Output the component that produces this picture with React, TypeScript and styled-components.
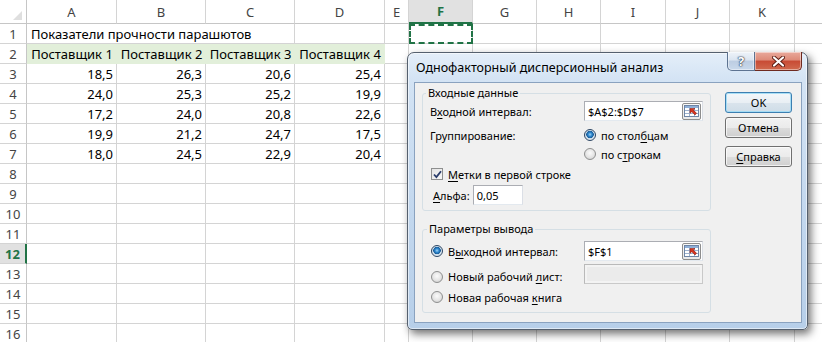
import React from 'react';
import styled, { createGlobalStyle } from 'styled-components';

const GlobalStyle = createGlobalStyle`
  html, body { margin: 0; padding: 0; background: #fff; overflow: hidden; }
  body { font-family: "Noto Sans", "Liberation Sans", sans-serif; }
`;

const COLS = [27, 90, 89, 89, 90, 24, 64, 64, 64, 65, 64, 65, 64];
const LETTERS = ['A', 'B', 'C', 'D', 'E', 'F', 'G', 'H', 'I', 'J', 'K', ''];
const GREEN = '#217346';

const DATA = [
  ['18,5', '26,3', '20,6', '25,4'],
  ['24,0', '25,3', '25,2', '19,9'],
  ['17,2', '24,0', '20,8', '22,6'],
  ['19,9', '21,2', '24,7', '17,5'],
  ['18,0', '24,5', '22,9', '20,4'],
];

const Page = styled.div`
  position: relative;
  width: 822px;
  height: 342px;
  overflow: hidden;
`;

const Sheet = styled.div`
  display: grid;
  grid-template-columns: ${COLS.map((c) => c + 'px').join(' ')};
  grid-template-rows: 24px repeat(16, 20px);
  font-size: 13px;
  color: #000;
`;

const Corner = styled.div`
  position: relative;
  box-sizing: border-box;
  border-right: 1px solid #c6c6c6;
  border-bottom: 1px solid #c6c6c6;
  background: #fff;

  &::after {
    content: '';
    position: absolute;
    right: 4px;
    bottom: 3px;
    border-left: 9px solid transparent;
    border-bottom: 9px solid #dfdfdf;
  }
`;

const ColHead = styled.div<{ $active?: boolean }>`
  box-sizing: border-box;
  display: flex;
  align-items: center;
  justify-content: center;
  border-right: 1px solid #d4d4d4;
  border-bottom: ${({ $active }) => ($active ? `2px solid ${GREEN}` : '1px solid #c6c6c6')};
  background: ${({ $active }) => ($active ? '#e1e1e1' : '#fff')};
  color: ${({ $active }) => ($active ? GREEN : '#444')};
  font-weight: ${({ $active }) => ($active ? 700 : 400)};
  font-size: 13px;
`;

const RowHead = styled.div<{ $active?: boolean }>`
  box-sizing: border-box;
  display: flex;
  align-items: center;
  justify-content: center;
  border-bottom: 1px solid #d4d4d4;
  border-right: ${({ $active }) => ($active ? `2px solid ${GREEN}` : '1px solid #c6c6c6')};
  background: ${({ $active }) => ($active ? '#e1e1e1' : '#fff')};
  color: ${({ $active }) => ($active ? GREEN : '#444')};
  font-weight: ${({ $active }) => ($active ? 700 : 400)};
  font-size: 13px;
`;

const Cell = styled.div<{ $align?: 'left' | 'right' | 'center'; $fill?: string; $span?: number; $marquee?: boolean }>`
  box-sizing: border-box;
  display: flex;
  align-items: center;
  justify-content: ${({ $align }) => ($align === 'right' ? 'flex-end' : $align === 'center' ? 'center' : 'flex-start')};
  padding: 0 3px 0 4px;
  white-space: nowrap;
  border-right: 1px solid ${({ $fill }) => $fill || '#d4d4d4'};
  border-bottom: 1px solid ${({ $fill }) => $fill || '#d4d4d4'};
  background: ${({ $fill }) => $fill || '#fff'};
  grid-column: span ${({ $span }) => $span || 1};
  outline: ${({ $marquee }) => ($marquee ? `2px dashed ${GREEN}` : 'none')};
  outline-offset: -2px;
`;

/* ---------- dialog ---------- */

const Dialog = styled.div`
  position: absolute;
  left: 407px;
  top: 52px;
  width: 401px;
  height: 278px;
  box-sizing: border-box;
  display: flex;
  flex-direction: column;
  border: 1px solid #55606e;
  border-radius: 7px 7px 5px 5px;
  background: linear-gradient(180deg, #e4eef9 0%, #d3e3f4 10%, #c2d7ee 60%, #b7cfe9 100%);
  box-shadow: inset 0 0 0 1px rgba(255, 255, 255, 0.55), 3px 4px 9px rgba(0, 0, 0, 0.55);
  font-family: "Noto Sans", "Liberation Sans", sans-serif;
  font-size: 11px;
  color: #000;
`;

const TitleBar = styled.div`
  height: 29px;
  display: flex;
  align-items: flex-start;
`;

const Title = styled.div`
  flex: 1;
  align-self: center;
  padding-left: 8px;
  font-size: 12.5px;
`;

const CaptionButtons = styled.div`
  display: flex;
  margin: -1px 5px 0 0;
`;

const CaptionBtn = styled.div<{ $close?: boolean }>`
  box-sizing: border-box;
  width: ${({ $close }) => ($close ? 47 : 28)}px;
  height: 19px;
  display: flex;
  align-items: center;
  justify-content: center;
  border: 1px solid ${({ $close }) => ($close ? '#6e2a20' : '#5d7391')};
  border-top: none;
  border-left: ${({ $close }) => ($close ? 'none' : '1px solid #5d7391')};
  border-radius: ${({ $close }) => ($close ? '0 0 5px 0' : '0 0 0 5px')};
  background: ${({ $close }) =>
    $close
      ? 'linear-gradient(180deg, #e9a99b 0%, #dd8a78 45%, #c84a34 50%, #d06a4e 100%)'
      : 'linear-gradient(180deg, #eef3f9 0%, #dbe5f1 45%, #bccde2 50%, #c9d9ec 100%)'};
  box-shadow: inset 0 0 0 1px rgba(255, 255, 255, 0.45);
`;

const HelpGlyph = styled.span`
  color: #fff;
  font-weight: 700;
  font-size: 13px;
  line-height: 1;
  text-shadow: 0 0 1px #2c3b52, 0 0 1px #2c3b52, 0 0 2px #2c3b52;
`;

const Client = styled.div`
  flex: 1;
  margin: 0 5px 6px 6px;
  display: flex;
  gap: 14px;
  padding: 2px 9px 0 7px;
  border: 1px solid #8aa2bf;
  background: #f0f0f0;
`;

const Groups = styled.div`
  width: 289px;
  display: flex;
  flex-direction: column;
  gap: 10px;
`;

const Group = styled.fieldset<{ $pl: number; $pt: number; $pb: number }>`
  margin: 0;
  min-width: 0;
  padding: ${({ $pt, $pl, $pb }) => `${$pt}px 7px ${$pb}px ${$pl}px`};
  border: 1px solid #d5dfe5;
  border-radius: 3px;
  display: flex;
  flex-direction: column;
`;

const Legend = styled.legend`
  margin-left: -4px;
  padding: 0 2px;
  line-height: 16px;
  font-size: 11px;
`;

const Row = styled.div<{ $h?: number; $mt?: number }>`
  display: grid;
  grid-template-columns: 1fr 119px;
  align-items: center;
  height: ${({ $h }) => $h || 20}px;
  margin-top: ${({ $mt }) => $mt || 0}px;
`;

const Label = styled.div<{ $indent?: number; $drop?: number }>`
  display: flex;
  align-items: center;
  gap: 5px;
  padding-left: ${({ $indent }) => $indent || 0}px;
  margin-top: ${({ $drop }) => $drop || 0}px;
  white-space: nowrap;
`;

const Key = styled.u`
  text-decoration-thickness: 1px;
  text-underline-offset: 2px;
`;

const Field = styled.div<{ $w?: number; $disabled?: boolean }>`
  box-sizing: border-box;
  width: ${({ $w }) => ($w ? $w + 'px' : '100%')};
  height: 20px;
  display: flex;
  align-items: center;
  padding: 0 1px 0 3px;
  border: 1px solid ${({ $disabled }) => ($disabled ? '#b9b9b9' : '#abadb3')};
  border-bottom-color: ${({ $disabled }) => ($disabled ? '#c9c9c9' : '#e3e9ef')};
  border-right-color: ${({ $disabled }) => ($disabled ? '#c9c9c9' : '#dbdfe6')};
  background: ${({ $disabled }) => ($disabled ? '#ebebeb' : '#fff')};
  box-shadow: ${({ $disabled }) => ($disabled ? 'inset 0 0 0 2px #f3f3f3' : 'none')};
`;

const FieldText = styled.span`
  flex: 1;
  white-space: nowrap;
`;

const RefBtn = styled.span`
  box-sizing: border-box;
  width: 19px;
  height: 17px;
  display: flex;
  align-items: center;
  justify-content: center;
  border: 1px solid #8d8d8d;
  border-radius: 2px;
  background: linear-gradient(180deg, #fafafa 0%, #e8e8e8 100%);
`;

const RadioDot = styled.span<{ $on?: boolean }>`
  box-sizing: border-box;
  flex: none;
  width: 12px;
  height: 12px;
  border-radius: 50%;
  border: 1px solid ${({ $on }) => ($on ? '#2c4563' : '#8e8f8f')};
  background: ${({ $on }) =>
    $on
      ? 'radial-gradient(circle at 50% 45%, #9fd3f7 0, #2b85cc 2px, #1a5b96 3.5px, #c9dcec 4px, #f1f1f1 6px)'
      : 'radial-gradient(circle at 50% 40%, #fbfbfb 0, #e6e6e6 4px, #d8d8d8 6px)'};
`;

const CheckBox = styled.span`
  box-sizing: border-box;
  flex: none;
  width: 12px;
  height: 12px;
  display: flex;
  align-items: center;
  justify-content: center;
  border: 1px solid #8e8f8f;
  background: linear-gradient(135deg, #e4e4e4 0%, #f7f7f7 100%);
`;

const AlphaRow = styled.div`
  display: flex;
  align-items: center;
  gap: 3px;
  height: 20px;
  margin-top: 2px;
  padding-left: 3px;
`;

const Buttons = styled.div`
  display: flex;
  flex-direction: column;
  padding-top: 7px;
`;

const DlgButton = styled.div<{ $default?: boolean; $mt?: number }>`
  box-sizing: border-box;
  width: 67px;
  height: 21px;
  margin-top: ${({ $mt }) => $mt || 0}px;
  display: flex;
  align-items: center;
  justify-content: center;
  border: 1px solid ${({ $default }) => ($default ? '#3c7fb1' : '#707070')};
  border-radius: 3px;
  background: ${({ $default }) =>
    $default
      ? 'linear-gradient(180deg, #f3f7fa 0%, #e9eff4 50%, #dae4ec 51%, #cfdde8 100%)'
      : 'linear-gradient(180deg, #f2f2f2 0%, #ebebeb 50%, #dddddd 51%, #cfcfcf 100%)'};
  box-shadow: inset 0 0 0 1px ${({ $default }) => ($default ? 'rgba(160, 220, 245, 0.9)' : 'rgba(255, 255, 255, 0.7)')};
`;

function RefIcon() {
  return (
    <svg width="15" height="12" viewBox="0 0 15 12">
      <rect x="0.5" y="0.5" width="14" height="11" fill="#fff" stroke="#6f86a6" />
      <rect x="1" y="1" width="13" height="2" fill="#8fb0d8" />
      <path d="M1 5.5h13M1 8.5h13M5.5 3v8M10.5 3v8" stroke="#9db3cf" strokeWidth="1" />
      <path d="M6 3.5l5 0-1.6 1.6 3.2 3.2-1.6 1.6-3.2-3.2L6 8.3z" fill="#d6331f" stroke="#8e1d10" strokeWidth="0.6" />
    </svg>
  );
}

function CloseIcon() {
  return (
    <svg width="13" height="11" viewBox="0 0 13 11">
      <path d="M2 1.5l9 8M11 1.5l-9 8" stroke="#5a1c12" strokeWidth="4" strokeLinecap="round" />
      <path d="M2 1.5l9 8M11 1.5l-9 8" stroke="#fff" strokeWidth="2.2" strokeLinecap="round" />
    </svg>
  );
}

function CheckMark() {
  return (
    <svg width="9" height="9" viewBox="0 0 9 9">
      <path d="M1 4.5l2.4 2.6L8 1.2" fill="none" stroke="#2a3c6b" strokeWidth="1.8" />
    </svg>
  );
}

function AnovaDialog() {
  return (
    <Dialog>
      <TitleBar>
        <Title>Однофакторный дисперсионный анализ</Title>
        <CaptionButtons>
          <CaptionBtn><HelpGlyph>?</HelpGlyph></CaptionBtn>
          <CaptionBtn $close><CloseIcon /></CaptionBtn>
        </CaptionButtons>
      </TitleBar>
      <Client>
        <Groups>
          <Group $pl={7} $pt={0} $pb={5}>
            <Legend>Входные данные</Legend>
            <Row>
              <Label><span>В<Key>х</Key>одной интервал:</span></Label>
              <Field>
                <FieldText>$A$2:$D$7</FieldText>
                <RefBtn><RefIcon /></RefBtn>
              </Field>
            </Row>
            <Row $h={18} $mt={5}>
              <Label><span>Группирование:</span></Label>
              <Label><RadioDot $on /><span>по стол<Key>б</Key>цам</span></Label>
            </Row>
            <Row $h={18} $mt={1}>
              <span />
              <Label><RadioDot /><span>по с<Key>т</Key>рокам</span></Label>
            </Row>
            <Row $h={18} $mt={2}>
              <Label $indent={1}><CheckBox><CheckMark /></CheckBox><span><Key>М</Key>етки в первой строке</span></Label>
            </Row>
            <AlphaRow>
              <span><Key>А</Key>льфа:</span>
              <Field $w={50}><FieldText>0,05</FieldText></Field>
            </AlphaRow>
          </Group>
          <Group $pl={8} $pt={4} $pb={6}>
            <Legend>Параметры вывода</Legend>
            <Row>
              <Label><RadioDot $on /><span>В<Key>ы</Key>ходной интервал:</span></Label>
              <Field>
                <FieldText>$F$1</FieldText>
                <RefBtn><RefIcon /></RefBtn>
              </Field>
            </Row>
            <Row $mt={2}>
              <Label $drop={6}><RadioDot /><span>Новый рабочий <Key>л</Key>ист:</span></Label>
              <Field $disabled />
            </Row>
            <Row $h={18} $mt={5}>
              <Label><RadioDot /><span>Новая рабочая <Key>к</Key>нига</span></Label>
            </Row>
          </Group>
        </Groups>
        <Buttons>
          <DlgButton $default>OK</DlgButton>
          <DlgButton $mt={4}>Отмена</DlgButton>
          <DlgButton $mt={8}><span><Key>С</Key>правка</span></DlgButton>
        </Buttons>
      </Client>
    </Dialog>
  );
}

export default function App() {
  const bodyRows = Array.from({ length: 16 }, (_, i) => i + 1);

  return (
    <Page>
      <GlobalStyle />
      <Sheet>
        <Corner />
        {LETTERS.map((l, i) => (
          <ColHead key={i} $active={l === 'F'}>{l}</ColHead>
        ))}
        {bodyRows.map((r) => {
          const cells: React.ReactNode[] = [];
          if (r === 1) {
            cells.push(<Cell key="a" $span={3}>Показатели прочности парашютов</Cell>);
            for (let c = 3; c < LETTERS.length; c++) {
              cells.push(<Cell key={c} $marquee={LETTERS[c] === 'F'} />);
            }
          } else if (r === 2) {
            for (let c = 0; c < LETTERS.length; c++) {
              cells.push(
                c < 4
                  ? <Cell key={c} $align="center" $fill="#e2efda">Поставщик {c + 1}</Cell>
                  : <Cell key={c} />
              );
            }
          } else {
            const vals = DATA[r - 3];
            for (let c = 0; c < LETTERS.length; c++) {
              cells.push(<Cell key={c} $align="right">{vals && c < 4 ? vals[c] : ''}</Cell>);
            }
          }
          return (
            <React.Fragment key={r}>
              <RowHead $active={r === 12}>{r}</RowHead>
              {cells}
            </React.Fragment>
          );
        })}
      </Sheet>
      <AnovaDialog />
    </Page>
  );
}
